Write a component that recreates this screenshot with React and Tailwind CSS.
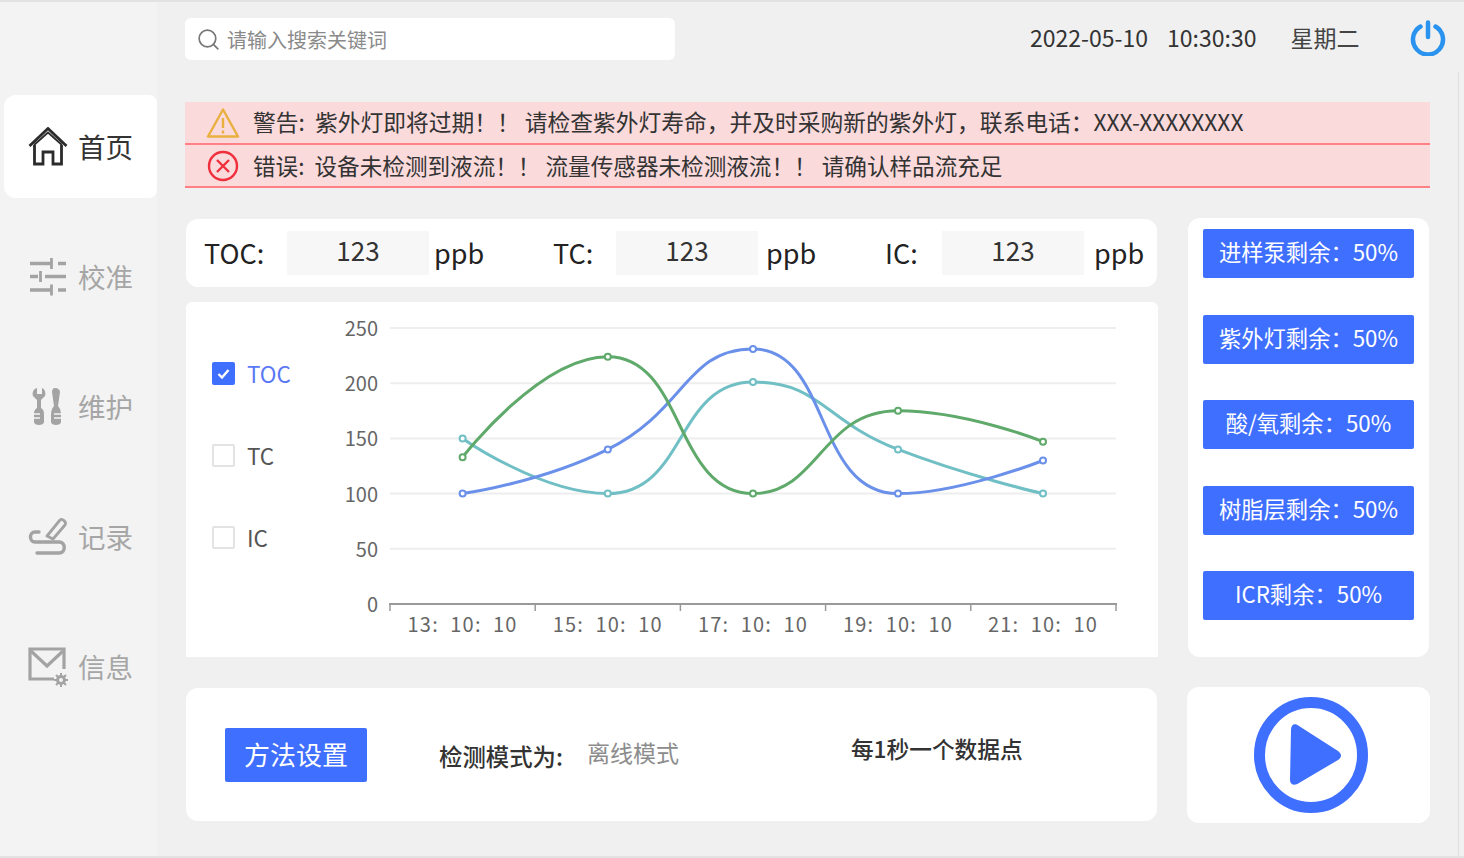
import { Search } from "lucide-react";

const font = { fontFamily: '"Noto Sans CJK SC", "Noto Sans", sans-serif' };

const xs = [462.6, 607.8, 753, 898, 1043];
const toY = (v) => 604 - v * 1.104;

const series = [
  { name: "teal", color: "#70bfc5", data: [150, 100, 201, 140, 100] },
  { name: "blue", color: "#6a90ea", data: [100, 140, 231, 100, 130] },
  { name: "green", color: "#5fa96b", data: [133, 224, 100, 175, 147] },
];

const clamp = (v, a, b) => Math.min(Math.max(v, Math.min(a, b)), Math.max(a, b));

// same steps as an echarts smooth line (smooth 0.5)
function smoothPath(data) {
  const pts = data.map((v, i) => [xs[i], toY(v)]);
  let cp0 = pts[0];
  let d = `M${pts[0][0]} ${pts[0][1]}`;
  for (let i = 1; i < pts.length; i++) {
    const [x, y] = pts[i];
    if (i === pts.length - 1) {
      d += ` C${cp0[0]} ${cp0[1]} ${x} ${y} ${x} ${y}`;
      break;
    }
    const [px, py] = pts[i - 1];
    const [nx, ny] = pts[i + 1];
    const lenPrev = Math.hypot(x - px, y - py);
    const lenNext = Math.hypot(nx - x, ny - y);
    const ratio = lenNext / (lenNext + lenPrev);
    let nextX = clamp(x + (nx - px) * 0.5 * ratio, x, nx);
    let nextY = clamp(y + (ny - py) * 0.5 * ratio, y, ny);
    let cx = clamp(x - ((nextX - x) * lenPrev) / lenNext, px, x);
    let cy = clamp(y - ((nextY - y) * lenPrev) / lenNext, py, y);
    nextX = x + ((x - cx) * lenNext) / lenPrev;
    nextY = y + ((y - cy) * lenNext) / lenPrev;
    d += ` C${cp0[0]} ${cp0[1]} ${cx} ${cy} ${x} ${y}`;
    cp0 = [nextX, nextY];
  }
  return d;
}

function HomeIcon() {
  return (
    <svg width="40" height="40" viewBox="0 0 40 40" fill="none" stroke="#2b2b2b" strokeWidth="2.8" strokeLinejoin="miter">
      <path d="M1.5 19 L20 1.5 L38.5 19" />
      <path d="M6 18 L20 5.5 L34 18" strokeWidth="1.8" />
      <path d="M6.5 18 V37 H15 V25 H25 V37 H33.5 V18" />
    </svg>
  );
}

function SlidersIcon() {
  return (
    <svg width="40" height="40" viewBox="0 0 40 40" fill="none" stroke="#a3a3a3" strokeWidth="3.4">
      <path d="M2 6.5 H23 M30 6.5 H38 M2 19.5 H10 M17 19.5 H38 M2 33 H23 M30 33 H38" />
      <path d="M23.5 1 V12 M12.5 14 V25 M23.5 27.5 V38.5" strokeWidth="2.8" />
    </svg>
  );
}

function ToolsIcon() {
  return (
    <svg width="40" height="40" viewBox="0 0 40 40" fill="#a3a3a3">
      <path d="M9 1 C5 2 4 6 5 9 L9 13 V21 C6 23 6 25 6 28 V35 C6 39 16 39 16 35 V28 C16 25 16 23 13 21 V13 L17 9 C18 6 17 2 14 1 V7 H9 Z" />
      <path d="M27 1 C25 1 24 3 24 5 L26 19 C24 21 23 24 23 28 V35 C23 39 33 39 33 35 V28 C33 24 32 21 30 19 L32 5 C32 3 30 1 27 1 Z" />
      <path d="M6 27 H12 M6 31 H12 M26 27 H33 M26 31 H33" stroke="#f3f3f3" strokeWidth="1.4" />
    </svg>
  );
}

function RecordIcon() {
  return (
    <svg width="40" height="40" viewBox="0 0 40 40" fill="none" stroke="#a3a3a3" strokeWidth="3.4" strokeLinecap="round" strokeLinejoin="round">
      <path d="M11 15 H7 C1 15 1 25 7 25 H31 C38 25 38 36 31 36 H9" />
      <path d="M19 19 L32 3 C34 1 39 5 37 8 L25 22 Z" strokeWidth="2.8" />
    </svg>
  );
}

function MailIcon() {
  return (
    <svg width="40" height="40" viewBox="0 0 40 40" fill="none" stroke="#a3a3a3" strokeWidth="3.2">
      <path d="M26 32 H2 V2 H36 V22" />
      <path d="M3 4 L19 19 L35 4" />
      <circle cx="33" cy="33" r="3.5" strokeWidth="3" />
      <path d="M33 26 V28.5 M33 37.5 V40 M26 33 H28.5 M37.5 33 H40 M28 28 L30 30 M36 36 L38 38 M38 28 L36 30 M30 36 L28 38" strokeWidth="2" />
    </svg>
  );
}

const nav = [
  { label: "首页", icon: <HomeIcon />, active: true },
  { label: "校准", icon: <SlidersIcon /> },
  { label: "维护", icon: <ToolsIcon /> },
  { label: "记录", icon: <RecordIcon /> },
  { label: "信息", icon: <MailIcon /> },
];

const consumables = ["进样泵剩余：50%", "紫外灯剩余：50%", "酸/氧剩余：50%", "树脂层剩余：50%", "ICR剩余：50%"];

function ValueBox() {
  return <div className="flex h-[44px] w-[142px] shrink-0 items-center justify-center bg-[#f7f7f7] pb-[8px] text-[26px] text-[#333]">123</div>;
}

function LegendItem({ label, checked }) {
  return (
    <div className="flex h-[23px] items-center gap-[12px]">
      {checked ? (
        <span className="flex h-[23px] w-[23px] items-center justify-center rounded-[2px] bg-[#3f6fff]">
          <svg width="13" height="13" viewBox="0 0 13 13" fill="none" stroke="#fff" strokeWidth="2.4"><path d="M1.5 7 L5 10.5 L11.5 3" /></svg>
        </span>
      ) : (
        <span className="h-[23px] w-[23px] rounded-[2px] border-2 border-[#e3e3e3] bg-white" />
      )}
      <span className={`text-[22.5px] ${checked ? "text-[#5a78f5]" : "text-[#555]"}`}>{label}</span>
    </div>
  );
}

function Chart() {
  return (
    <svg width="800" height="340" viewBox="330 310 800 340" className="mt-[8px] shrink-0">
      {[0, 50, 100, 150, 200, 250].map((v) => (
        <g key={v}>
          {v > 0 && <line x1="390" x2="1116" y1={toY(v)} y2={toY(v)} stroke="#eeeeee" strokeWidth="2" />}
          <text x="378" y={toY(v) + 8} textAnchor="end" fontSize="20" fill="#666">{v}</text>
        </g>
      ))}
      <line x1="389" x2="1117" y1="604" y2="604" stroke="#9a9a9a" strokeWidth="2" />
      {[390, 535.2, 680.4, 825.6, 970.8, 1116].map((x) => (
        <line key={x} x1={x} x2={x} y1="604" y2="611" stroke="#9a9a9a" strokeWidth="1.5" />
      ))}
      {["13", "15", "17", "19", "21"].map((h, i) => (
        <text key={h} x={xs[i]} y="632" textAnchor="middle" fontSize="20" letterSpacing="1.2" fill="#666" xmlSpace="preserve">{`${h}:  10:  10`}</text>
      ))}
      {series.map((s) => (
        <g key={s.name}>
          <path d={smoothPath(s.data)} fill="none" stroke={s.color} strokeWidth="3" />
          {s.data.map((v, i) => (
            <circle key={i} cx={xs[i]} cy={toY(v)} r="3" fill="#fff" stroke={s.color} strokeWidth="2" />
          ))}
        </g>
      ))}
    </svg>
  );
}

export default function App() {
  return (
    <div style={font} className="relative flex h-[858px] w-[1464px] overflow-hidden border-t-2 border-b-2 border-[#e2e2e2] bg-[#f0f0f0]">
      <aside className="flex w-[157px] shrink-0 flex-col gap-[27px] bg-[#f3f3f3] pl-1 pt-[93px]">
        {nav.map((item) => (
          <div key={item.label} className={`flex h-[103px] items-center gap-[10px] rounded-l-xl rounded-r-lg pl-[24px] ${item.active ? "bg-white" : ""}`}>
            {item.icon}
            <span className={`text-[27.5px] leading-none ${item.active ? "text-[#333]" : "text-[#a6a6a6]"}`}>{item.label}</span>
          </div>
        ))}
      </aside>

      <main className="flex min-w-0 flex-1 flex-col pl-[28px] pr-[34px] pt-[16px]">
        <header className="flex h-[42px] items-center whitespace-nowrap">
          <div className="flex h-[42px] w-[490px] shrink-0 items-center gap-[6px] rounded-md bg-white pl-[11px]">
            <Search size={25} strokeWidth={1.6} color="#777" />
            <span className="pt-[2px] text-[20px] text-[#8a8a8a]">请输入搜索关键词</span>
          </div>
          <span className="ml-[355px] pb-[3px] text-[23px] text-[#333]">2022-05-10</span>
          <span className="ml-[19px] pb-[3px] text-[23px] text-[#333]">10:30:30</span>
          <span className="ml-[34px] pb-[3px] text-[23px] text-[#444]">星期二</span>
          <svg width="36" height="36" viewBox="0 0 36 36" fill="none" stroke="#2a93f0" strokeWidth="4.5" strokeLinecap="round" className="mb-[3px] ml-[51px] shrink-0">
            <path d="M10.5 6.5 A15 15 0 1 0 25.5 6.5" />
            <path d="M18 2.5 V17" />
          </svg>
        </header>

        <section className="mt-[42px] w-[1245px] bg-[#fadadb] text-[#333]">
          <div className="flex h-[43px] items-center border-b-2 border-[#ff8185] pl-[21px]">
            <svg width="34" height="32" viewBox="0 0 34 32" fill="none" stroke="#e9b040" strokeWidth="2.4" strokeLinejoin="round" className="shrink-0">
              <path d="M17 2.5 L32 29.5 H2 Z" />
              <path d="M17 11 V21 M17 23.5 V26.5" />
            </svg>
            <span className="ml-[13px] whitespace-pre text-[22.75px]">
              <span className="mr-[5px]">警告:</span> 紫外灯即将过期！！ 请检查紫外灯寿命，并及时采购新的紫外灯，联系电话：XXX-XXXXXXXX
            </span>
          </div>
          <div className="flex h-[43px] items-center border-b-2 border-[#ff8185] pl-[22px]">
            <svg width="32" height="32" viewBox="0 0 32 32" fill="none" stroke="#f02f3c" strokeWidth="2.4" className="shrink-0">
              <circle cx="16" cy="16" r="14" />
              <path d="M10 10 L22 22 M22 10 L10 22" />
            </svg>
            <span className="ml-[14px] whitespace-pre text-[22.6px]">
              <span className="mr-[5px]">错误:</span> 设备未检测到液流！！ 流量传感器未检测液流！！ 请确认样品流充足
            </span>
          </div>
        </section>

        <div className="mt-[31px] flex gap-[30px]">
          <div className="flex w-[973px] shrink-0 flex-col">
            <div className="ml-px flex h-[68px] w-[971px] items-center rounded-xl bg-white pl-[18px] text-[27px] text-[#222]">
              <span className="w-[83px] shrink-0">TOC:</span>
              <ValueBox />
              <span className="ml-[5px] w-[119px] shrink-0">ppb</span>
              <span className="w-[63px] shrink-0">TC:</span>
              <ValueBox />
              <span className="ml-[8px] w-[119px] shrink-0">ppb</span>
              <span className="w-[57px] shrink-0">IC:</span>
              <ValueBox />
              <span className="ml-[10px]">ppb</span>
            </div>

            <div className="ml-px mt-[15px] flex h-[355px] w-[972px] rounded-t-md bg-white">
              <div className="flex w-[144px] shrink-0 flex-col gap-[59px] pl-[26px] pt-[60px]">
                <LegendItem label="TOC" checked />
                <LegendItem label="TC" />
                <LegendItem label="IC" />
              </div>
              <Chart />
            </div>

            <div className="ml-px mt-[31px] flex h-[133px] w-[971px] items-center whitespace-nowrap rounded-xl bg-white pl-[39px]">
              <div className="flex h-[54px] w-[142px] items-center justify-center rounded-[2px] bg-[#3f6fff] pb-[3px] text-[26px] text-white">方法设置</div>
              <span className="ml-[72px] mt-[4px] text-[23.4px] font-medium text-[#333]">检测模式为:</span>
              <span className="mb-[5px] ml-[24px] text-[23px] text-[#8c8c8c]">离线模式</span>
              <span className="mb-[10px] ml-[172px] text-[22.7px] font-medium text-[#333]">每1秒一个数据点</span>
            </div>
          </div>

          <div className="flex w-[242px] flex-col gap-[30px]">
            <div className="-mt-px flex h-[439px] w-[241px] flex-col gap-[36.5px] rounded-xl bg-white pl-[15px] pt-[11px]">
              {consumables.map((text) => (
                <div key={text} className="flex h-[49px] w-[211px] items-center justify-center rounded-[2px] bg-[#3f6fff] pb-[3px] text-[22.3px] text-white">{text}</div>
              ))}
            </div>
            <div className="-ml-px flex h-[136px] w-[243px] items-center justify-center rounded-xl bg-white">
              <svg width="114" height="116" viewBox="0 0 114 116" fill="#3f6fff" className="ml-[4px]">
                <ellipse cx="57" cy="58" rx="51.5" ry="52.5" fill="none" stroke="#3f6fff" strokeWidth="11" />
                <path d="M37 33 C37 27 41 26 45 29 L84 54 C88 57 88 60 84 63 L45 86 C41 89 36 88 36 83 Z" />
              </svg>
            </div>
          </div>
        </div>
      </main>

      <div className="absolute bottom-0 right-[5px] top-[70px] w-px bg-[#dedede]" />
    </div>
  );
}
